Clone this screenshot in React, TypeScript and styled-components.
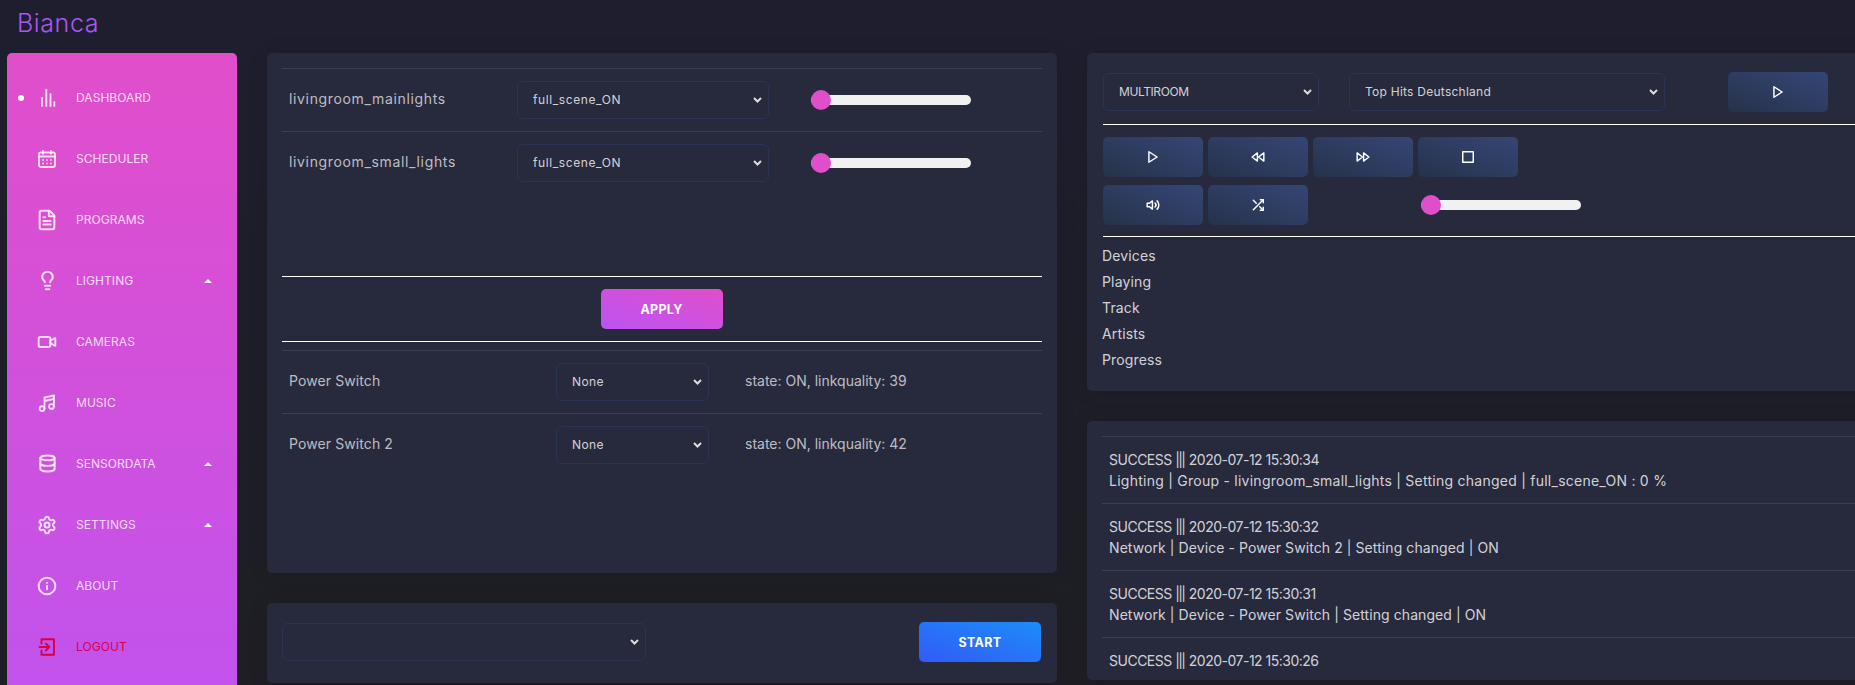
import React from "react";
import styled, { createGlobalStyle } from "styled-components";
import { FileText, Lightbulb, Video, Database, Settings, Info } from "lucide-react";

const Global = createGlobalStyle`
  html, body { margin: 0; padding: 0; height: 685px; overflow: hidden; }
  body { background: linear-gradient(#1e1e2f, #1e1e24); font-family: "Inter", "Noto Sans", sans-serif; color: rgba(255,255,255,.8); }
`;
const Page = styled.div`width: 1855px; height: 685px; overflow: hidden;`;
const TopBar = styled.div`height: 53px; padding-left: 17px; display: flex; align-items: flex-start;`;
const Brand = styled.div`font-size: 25px; line-height: 46px; font-weight: 300; color: #ab55f8; letter-spacing: .6px;`;
const Body = styled.div`display: flex; padding-left: 7px; align-items: flex-start;`;
const Sidebar = styled.nav`
  width: 230px; height: 790px; flex: none; border-radius: 5px; padding-top: 14px; box-sizing: border-box;
  background: linear-gradient(0deg, #ba54f5, #e14eca); display: flex; flex-direction: column;
`;
const NavItem = styled.div<{ $danger?: boolean }>`
  height: 61px; flex: none; position: relative; display: flex; align-items: center; padding-left: 31px; gap: 20px;
  color: ${p => (p.$danger ? "#d6004e" : "rgba(255,255,255,.8)")};
  font-size: 12px; letter-spacing: .05px; text-transform: uppercase; font-weight: 400;
`;
const IconSlot = styled.span`width: 18px; height: 18px; flex: none; display: flex; align-items: center; justify-content: center; svg { flex: none; }`;
const NavDot = styled.span`position: absolute; left: 11px; top: 28px; width: 6px; height: 6px; border-radius: 50%; background: #fff;`;
const Caret = styled.span`position: absolute; right: 25px; top: 29px; width: 0; height: 0; border-left: 4px solid transparent; border-right: 4px solid transparent; border-bottom: 4px solid #fff;`;
const Columns = styled.div`margin-left: 30px; display: flex; gap: 30px; align-items: flex-start;`;
const Column = styled.div`width: 790px; display: flex; flex-direction: column; gap: 30px;`;
const Card = styled.section<{ $h: number }>`
  background: #27293d; border-radius: 5px; height: ${p => p.$h}px; box-sizing: border-box; padding: 15px; overflow: hidden;
  box-shadow: 0 1px 20px 0 rgba(0,0,0,.1);
`;
const SoftRule = styled.div<{ $top?: number }>`height: 1px; background: rgba(255,255,255,.1); margin-top: ${p => p.$top ?? 0}px;`;
const HardRule = styled.div<{ $top?: number }>`height: 1px; background: #fff; margin-top: ${p => p.$top ?? 0}px;`;
const Row = styled.div<{ $labelW: number }>`
  height: 62px; display: grid; grid-template-columns: ${p => p.$labelW}px auto 1fr; align-items: center; padding-left: 7px;
  font-size: 14px; color: rgba(255,255,255,.7);
`;
const Label = styled.span<{ $sp: number }>`transform: translateY(-2px); letter-spacing: ${p => p.$sp}px;`;
const chevron = `url("data:image/svg+xml,%3Csvg xmlns='http://www.w3.org/2000/svg' width='9' height='6' viewBox='0 0 9 6'%3E%3Cpath d='M1 1l3.5 3.5L8 1' fill='none' stroke='%23ddd' stroke-width='2'/%3E%3C/svg%3E")`;
const Select = styled.select<{ $w: number; $sp?: number }>`
  appearance: none; -webkit-appearance: none;
  width: ${p => p.$w}px; height: 38px; box-sizing: border-box; background: #27293d ${chevron} no-repeat right 6px center; border: 1px solid #2b3553; border-radius: 6px;
  color: rgba(255,255,255,.8); font-family: inherit; font-size: 12px; padding: 0 15px 1px; outline: none; letter-spacing: ${p => p.$sp ?? 0}px;
`;
const Range = styled.input.attrs({ type: "range", min: 0, max: 100, defaultValue: 0 })<{ $ml: number }>`
  appearance: none; -webkit-appearance: none; width: 160px; height: 10px; margin: 0 0 0 ${p => p.$ml}px; border-radius: 5px; background: #f1f1f1; outline: none;
  &::-webkit-slider-thumb { -webkit-appearance: none; appearance: none; width: 20px; height: 20px; border-radius: 50%; background: #e14eca; }
`;
const State = styled.span`padding-left: 36px; letter-spacing: 0; transform: translateY(-2px);`;
const ApplyRow = styled.div`height: 64px; display: flex; justify-content: center; align-items: center; padding-right: 1px;`;
const GradButton = styled.button<{ $v: "primary" | "info" }>`
  width: 122px; height: 40px; border: 0; border-radius: 5px; color: #fff; font-family: inherit; font-size: 12.5px; font-weight: 700; letter-spacing: .3px;
  background-image: ${p => p.$v === "primary" ? "linear-gradient(to bottom left, #e14eca, #ba54f5, #e14eca)" : "linear-gradient(to bottom left, #1d8cf8, #3358f8, #1d8cf8)"};
  background-size: 210% 210%; background-position: top right; padding: 0;
`;
const StartCard = styled(Card)`padding: 0 16px 2px 15px; display: flex; justify-content: space-between; align-items: center;`;
const PlayerCard = styled(Card)`padding-left: 16px;`;
const PlayerTop = styled.div`height: 56px; display: flex; align-items: center; padding: 4px 0 12px; box-sizing: border-box; gap: 30px;`;
const PlayBtnSlot = styled.div`margin-left: 33px;`;
const IconBtn = styled.button`
  width: 100px; height: 40px; flex: none; border: 0; border-radius: 5px; color: #fff; padding: 0; display: flex; align-items: center; justify-content: center;
  background-image: linear-gradient(to bottom left, #344675, #263148, #344675); background-size: 210% 210%; background-position: top right;
`;
const PlayerIcon = styled.svg.attrs({ viewBox: "0 0 24 24", width: 14, height: 14, fill: "none", stroke: "currentColor", strokeWidth: 2.5, strokeLinecap: "round", strokeLinejoin: "round" })``;
const BtnGrid = styled.div`padding: 12px 0 11px; display: flex; flex-direction: column; gap: 8px;`;
const BtnRow = styled.div`display: flex; gap: 5px; align-items: center;`;
const InfoList = styled.div`padding-top: 6px; margin-left: -1px; display: flex; flex-direction: column;`;
const InfoLine = styled.div`height: 26px; line-height: 26px; font-size: 14px; color: rgba(255,255,255,.8); letter-spacing: .15px;`;
const LogEntry = styled.div`
  padding: 12px 7px; min-height: 42px; border-bottom: 1px solid rgba(255,255,255,.1);
  font-size: 14px; line-height: 21px; color: rgba(255,255,255,.8);
`;
const LogHead = styled.div`white-space: nowrap; letter-spacing: -.5px;`;
const Pipes = styled.span`letter-spacing: -1.6px; margin-right: 1px;`;
const LogLine = styled.div<{ $sp: number }>`white-space: nowrap; letter-spacing: ${p => p.$sp}px;`;

const SvgBase = styled.svg.attrs({ viewBox: "0 0 18 18", width: 18, height: 18, fill: "none", stroke: "currentColor", strokeWidth: 1.9, strokeLinecap: "round", strokeLinejoin: "round" })``;
const BarsIcon = () => (
  <SvgBase strokeWidth={2.3} strokeLinecap="butt">
    <path d="M4 17V9M8.3 17V0.5M12.5 17V5M16.3 17V13" />
  </SvgBase>
);
const CalendarIcon = () => (
  <SvgBase>
    <rect x="1" y="2.5" width="16" height="14.5" rx="2" />
    <path d="M1 6.5h16M5 0.8v3M13 0.8v3" />
    <path strokeWidth={1.6} strokeLinecap="butt" d="M4.2 10h1.8M8.1 10h1.8M12 10h1.8M4.2 13.5h1.8M8.1 13.5h1.8M12 13.5h1.8" />
  </SvgBase>
);
const MusicIcon = () => (
  <SvgBase>
    <path d="M6.5 14.5V3.5L16 1.5V12M6.5 7L16 5" />
    <circle cx="4" cy="14.7" r="2.4" />
    <circle cx="13.5" cy="12.5" r="2.4" />
  </SvgBase>
);
const LogoutIcon = () => (
  <SvgBase>
    <path d="M3.5 5.5V1.2H16V16.8H3.5V12.5" />
    <path d="M1.5 9H11M7.8 5.5L11.3 9L7.8 12.5" />
  </SvgBase>
);
const PlayIcon = () => <PlayerIcon><polygon points="5 3 19 12 5 21 5 3" /></PlayerIcon>;
const RewindIcon = () => <PlayerIcon><polygon points="11 19 2 12 11 5 11 19" /><polygon points="22 19 13 12 22 5 22 19" /></PlayerIcon>;
const ForwardIcon = () => <PlayerIcon><polygon points="13 19 22 12 13 5 13 19" /><polygon points="2 19 11 12 2 5 2 19" /></PlayerIcon>;
const StopIcon = () => <PlayerIcon strokeLinejoin="miter"><rect x="3" y="3" width="18" height="18" /></PlayerIcon>;
const VolumeIcon = () => <PlayerIcon><polygon points="11 5 6 9 2 9 2 15 6 15 11 19 11 5" /><path d="M19.07 4.93a10 10 0 0 1 0 14.14M15.54 8.46a5 5 0 0 1 0 7.07" /></PlayerIcon>;
const ShuffleIcon = () => <PlayerIcon width={15} height={15}><polyline points="16 3 21 3 21 8" /><line x1="4" y1="20" x2="21" y2="3" /><polyline points="21 16 21 21 16 21" /><line x1="15" y1="15" x2="21" y2="21" /><line x1="4" y1="4" x2="9" y2="9" /></PlayerIcon>;

const logs: { head: string; body?: string; sp?: number }[] = [
  { head: "2020-07-12 15:30:34", body: "Lighting | Group - livingroom_small_lights | Setting changed | full_scene_ON : 0 %", sp: .25 },
  { head: "2020-07-12 15:30:32", body: "Network | Device - Power Switch 2 | Setting changed | ON", sp: .08 },
  { head: "2020-07-12 15:30:31", body: "Network | Device - Power Switch | Setting changed | ON", sp: .08 },
  { head: "2020-07-12 15:30:26" },
];
const nav: { t: string; icon: React.ReactNode; caret?: boolean }[] = [
  { t: "Dashboard", icon: <BarsIcon /> },
  { t: "Scheduler", icon: <CalendarIcon /> },
  { t: "Programs", icon: <FileText size={22} strokeWidth={2.2} /> },
  { t: "Lighting", icon: <Lightbulb size={21} strokeWidth={2.3} />, caret: true },
  { t: "Cameras", icon: <Video size={20} strokeWidth={2.3} /> },
  { t: "Music", icon: <MusicIcon /> },
  { t: "Sensordata", icon: <Database size={19} strokeWidth={2.5} />, caret: true },
  { t: "Settings", icon: <Settings size={20} strokeWidth={2.4} />, caret: true },
  { t: "About", icon: <Info size={20} strokeWidth={2.4} /> },
];

export default function App() {
  return (
    <Page>
      <Global />
      <TopBar><Brand>Bianca</Brand></TopBar>
      <Body>
        <Sidebar>
          {nav.map(({ t, icon, caret }, i) => (
            <NavItem key={t}>
              {i === 0 && <NavDot />}
              <IconSlot>{icon}</IconSlot>
              <span>{t}</span>
              {caret && <Caret />}
            </NavItem>
          ))}
          <NavItem $danger><IconSlot><LogoutIcon /></IconSlot><span>Logout</span></NavItem>
        </Sidebar>
        <Columns>
          <Column>
            <Card $h={520}>
              <SoftRule />
              <Row $labelW={228}><Label $sp={.65}>livingroom_mainlights</Label><Select $w={252} $sp={.6}><option>full_scene_ON</option></Select><Range $ml={42} /></Row>
              <SoftRule />
              <Row $labelW={228}><Label $sp={.65}>livingroom_small_lights</Label><Select $w={252} $sp={.6}><option>full_scene_ON</option></Select><Range $ml={42} /></Row>
              <HardRule $top={82} />
              <ApplyRow><GradButton $v="primary">APPLY</GradButton></ApplyRow>
              <HardRule />
              <SoftRule $top={8} />
              <Row $labelW={267}><Label $sp={.1}>Power Switch</Label><Select $w={153} $sp={.4}><option>None</option></Select><State>state: ON, linkquality: 39</State></Row>
              <SoftRule />
              <Row $labelW={267}><Label $sp={.1}>Power Switch 2</Label><Select $w={153} $sp={.4}><option>None</option></Select><State>state: ON, linkquality: 42</State></Row>
            </Card>
            <StartCard $h={80}>
              <Select $w={364}><option></option></Select>
              <GradButton $v="info">START</GradButton>
            </StartCard>
          </Column>
          <Column>
            <PlayerCard $h={338}>
              <PlayerTop>
                <Select $w={216} $sp={-.4}><option>MULTIROOM</option></Select>
                <Select $w={316} $sp={.25}><option>Top Hits Deutschland</option></Select>
                <PlayBtnSlot><IconBtn><PlayIcon /></IconBtn></PlayBtnSlot>
              </PlayerTop>
              <HardRule />
              <BtnGrid>
                <BtnRow><IconBtn><PlayIcon /></IconBtn><IconBtn><RewindIcon /></IconBtn><IconBtn><ForwardIcon /></IconBtn><IconBtn><StopIcon /></IconBtn></BtnRow>
                <BtnRow><IconBtn><VolumeIcon /></IconBtn><IconBtn><ShuffleIcon /></IconBtn><Range $ml={108} /></BtnRow>
              </BtnGrid>
              <HardRule />
              <InfoList>{["Devices", "Playing", "Track", "Artists", "Progress"].map(t => <InfoLine key={t}>{t}</InfoLine>)}</InfoList>
            </PlayerCard>
            <Card $h={259}>
              <SoftRule />
              {logs.map(l => (
                <LogEntry key={l.head}>
                  <LogHead>SUCCESS <Pipes>|||</Pipes> {l.head}</LogHead>
                  {l.body && <LogLine $sp={l.sp ?? 0}>{l.body}</LogLine>}
                </LogEntry>
              ))}
            </Card>
          </Column>
        </Columns>
      </Body>
    </Page>
  );
}
